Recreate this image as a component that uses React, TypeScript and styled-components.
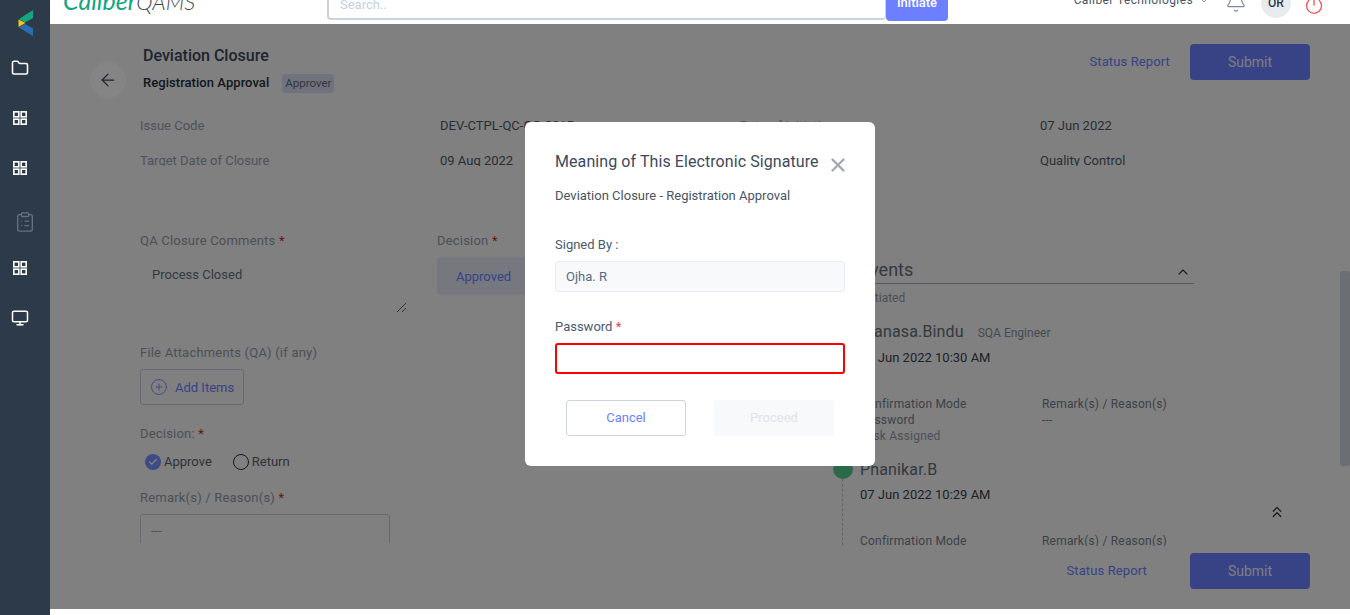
import React from "react";
import styled, { createGlobalStyle } from "styled-components";
import {
  ArrowLeft,
  Bell,
  Check,
  ChevronDown,
  ChevronsUp,
  ChevronUp,
  CirclePlus,
  ClipboardList,
  Folder,
  Monitor,
  Power,
  X,
} from "lucide-react";

const GlobalStyle = createGlobalStyle`
  html, body {
    margin: 0;
    padding: 0;
    height: 100%;
    overflow: hidden;
    background: #fff;
    font-family: Roboto, "Liberation Sans", sans-serif;
  }
  * { box-sizing: border-box; }
`;

const Page = styled.div`
  display: flex;
  width: 1350px;
  height: 615px;
  overflow: hidden;
`;

const Sidebar = styled.nav`
  width: 50px;
  flex: none;
  background: #2c3a4a;
  display: flex;
  flex-direction: column;
`;

const LogoSlot = styled.div`
  height: 43px;
  padding: 10px 0 0 18px;
`;

const NavItem = styled.div<{ $muted?: boolean }>`
  height: 50px;
  display: flex;
  align-items: center;
  padding-left: ${(p) => (p.$muted ? "14px" : "11px")};
  padding-top: ${(p) => (p.$muted ? "8px" : "0")};
  color: ${(p) => (p.$muted ? "#64717f" : "#ffffff")};
`;

const Shell = styled.div`
  flex: 1;
  min-width: 0;
  display: flex;
  flex-direction: column;
`;

const TopBar = styled.header`
  height: 24px;
  flex: none;
  position: relative;
  z-index: 3;
  background: #fff;
  overflow: hidden;
  display: flex;
  align-items: flex-end;
`;

const Brand = styled.div`
  width: 277px;
  padding-left: 13px;
  flex: none;
  display: flex;
  align-items: baseline;
  height: 40px;
  line-height: 40px;
  margin-bottom: 4px;
  font-family: Lato, sans-serif;
  font-size: 25px;
`;

const BrandGreen = styled.span`
  color: #12a77f;
  font-style: italic;
`;

const BrandThin = styled.span`
  color: #3c4652;
  font-style: italic;
  font-weight: 300;
  font-size: 22px;
`;

const SearchBox = styled.div`
  width: 559px;
  height: 40px;
  margin-bottom: 4px;
  flex: none;
  border: 2px solid #c9d4e2;
  border-right-width: 1px;
  border-radius: 4px;
  background: #fff;
  padding: 15px 0 0 11px;
  font-size: 13px;
  line-height: 16px;
  color: #c4cfe2;
`;

const InitiateButton = styled.div`
  width: 62px;
  height: 40px;
  margin-bottom: 3px;
  flex: none;
  background: #6c80ff;
  border-radius: 4px;
  color: #fff;
  font-size: 13px;
  font-weight: 500;
  text-align: center;
  padding-top: 14px;
  line-height: 16px;
`;

const TopRight = styled.div`
  margin-left: auto;
  display: flex;
  align-items: flex-end;
  height: 100%;
  position: relative;
`;

const Company = styled.div`
  font-size: 12px;
  line-height: 14px;
  color: #4a5563;
  position: absolute;
  right: 157px;
  bottom: 17px;
  white-space: nowrap;
  letter-spacing: 0.4px;
`;

const Caret = styled.span`
  position: absolute;
  right: 142px;
  bottom: 19px;
  color: #4a5563;
  display: flex;
`;

const BellWrap = styled.span`
  position: absolute;
  right: 103px;
  bottom: 11px;
  color: #7a8ba3;
  display: flex;
`;

const Avatar = styled.div`
  position: absolute;
  right: 59px;
  bottom: 6px;
  width: 30px;
  height: 30px;
  border-radius: 50%;
  background: #e9ecef;
  color: #2c3a4a;
  font-size: 12px;
  font-weight: 500;
  display: flex;
  align-items: center;
  justify-content: center;
`;

const PowerWrap = styled.span`
  position: absolute;
  right: 26px;
  bottom: 9px;
  color: #f4525c;
  display: flex;
`;

const Main = styled.main`
  height: 585px;
  flex: none;
  position: relative;
  background: #f5f5f5;
  overflow: hidden;
`;

const Heading = styled.section`
  height: 74px;
  padding: 20px 40px 0 40px;
  display: flex;
`;

const BackCircle = styled.div`
  width: 36px;
  height: 36px;
  margin-top: 18px;
  border-radius: 50%;
  background: #fff;
  color: #3a4757;
  display: flex;
  align-items: center;
  justify-content: center;
  flex: none;
`;

const TitleBlock = styled.div`
  margin-left: 17px;
`;

const PageTitle = styled.h1`
  margin: 1px 0 0;
  font-size: 16px;
  font-weight: 500;
  line-height: 22px;
  color: #3a4757;
`;

const SubRow = styled.div`
  margin-top: 6px;
  display: flex;
  align-items: center;
  gap: 13px;
`;

const SubTitle = styled.h2`
  margin: 0;
  font-size: 13px;
  font-weight: 500;
  line-height: 20px;
  letter-spacing: 0.05px;
  color: #262e3c;
`;

const RoleBadge = styled.span`
  padding: 0 3px;
  height: 19px;
  line-height: 19px;
  font-size: 11.5px;
  color: #5f6a7a;
  background: #d6dcf0;
  border-radius: 3px;
`;

const Actions = styled.div`
  margin-left: auto;
  display: flex;
  align-items: center;
  gap: 20px;
  height: 36px;
`;

const LinkText = styled.span`
  font-size: 13px;
  letter-spacing: 0.12px;
  color: #6c80ff;
  margin-bottom: 2px;
`;

const SubmitButton = styled.div`
  width: 120px;
  height: 36px;
  border-radius: 4px;
  background: #6c80ff;
  color: rgba(255, 255, 255, 0.9);
  font-size: 14px;
  font-weight: 400;
  display: flex;
  align-items: center;
  justify-content: center;
`;

const InfoGrid = styled.section`
  height: 48px;
  margin-top: 20px;
  padding-left: 90px;
  display: grid;
  grid-template-columns: repeat(4, 300px);
  grid-auto-rows: 34.5px;
  overflow: hidden;
  font-size: 13px;
  line-height: 16px;
`;

const InfoLabel = styled.span`
  color: #94a0b0;
`;

const InfoValue = styled.span`
  color: #515a66;
`;

const Body = styled.section`
  height: 314px;
  margin-top: 66px;
  display: flex;
  padding-left: 90px;
  overflow: hidden;
`;

const FormColumn = styled.div`
  width: 297px;
  height: 311px;
  padding-top: 1px;
  overflow: hidden;
  flex: none;
  display: flex;
  flex-direction: column;
  & > * {
    flex: none;
  }
`;

const FieldLabel = styled.label<{ $gap?: number }>`
  margin-top: ${(p) => p.$gap ?? 0}px;
  font-size: 13px;
  line-height: 16px;
  color: #919aa8;
  letter-spacing: 0.2px;
`;

const Req = styled.span<{ $bright?: boolean }>`
  color: ${(p) => (p.$bright ? "#f04050" : "#e01818")};
`;

const CommentArea = styled.div`
  height: 58px;
  margin-top: 9px;
  width: 270px;
  padding: 9px 12px 0;
  font-size: 13px;
  line-height: 16px;
  color: #66707f;
  position: relative;
`;

const ResizeGrip = styled.svg`
  position: absolute;
  right: 3px;
  bottom: 3px;
`;

const AddButton = styled.div`
  margin-top: 8px;
  width: 104px;
  height: 36px;
  border: 1px solid #c4cad4;
  border-radius: 3px;
  display: flex;
  align-items: center;
  gap: 7px;
  padding-left: 9px;
  font-size: 13px;
  color: #6c80ff;
`;

const RadioRow = styled.div`
  margin-top: 12px;
  padding-left: 5px;
  display: flex;
  gap: 21px;
`;

const RadioOption = styled.span`
  display: flex;
  align-items: center;
  gap: 3px;
  font-size: 13px;
  line-height: 16px;
  color: #596270;
`;

const RadioDot = styled.span<{ $on?: boolean }>`
  width: 16px;
  height: 16px;
  border-radius: 50%;
  display: flex;
  align-items: center;
  justify-content: center;
  color: #fff;
  background: ${(p) => (p.$on ? "#7890ff" : "transparent")};
  border: ${(p) => (p.$on ? "none" : "1.5px solid #262e3c")};
`;

const RemarkBox = styled.div`
  margin-top: 8px;
  width: 250px;
  height: 60px;
  border: 1px solid #c4cad4;
  border-radius: 3px;
  padding: 8px 10px;
  font-size: 13px;
  line-height: 16px;
  color: #919aa8;
`;

const DecisionColumn = styled.div`
  width: 300px;
  padding-top: 1px;
  flex: none;
  display: flex;
  flex-direction: column;
`;

const ApprovedField = styled.div`
  margin-top: 8px;
  height: 38px;
  width: 240px;
  background: #e3e7f5;
  border-radius: 3px;
  padding: 12px 19px 0;
  font-size: 13px;
  line-height: 16px;
  color: #6c80ff;
`;

const EventsColumn = styled.div`
  width: 400px;
  flex: none;
  margin-left: 113px;
  display: flex;
  flex-direction: column;
  & > * {
    flex: none;
  }
`;

const EventsHead = styled.div`
  margin-top: 28px;
  width: 344px;
  height: 24px;
  border-bottom: 1px solid #a8afba;
  display: flex;
  align-items: flex-start;
  justify-content: space-between;
  padding-left: 10px;
  padding-right: 3px;
  color: #646e7b;
  font-size: 18px;
  line-height: 20px;
`;

const HeadChevron = styled.span`
  display: flex;
  margin-top: 4px;
  color: #2c3a4a;
`;

const Initiated = styled.div`
  margin-top: 7px;
  padding-left: 12px;
  font-size: 12px;
  line-height: 14px;
  color: #939aa8;
`;

const EventEntry = styled.div<{ $gap?: number; $height: number }>`
  position: relative;
  padding-left: 10px;
  margin-top: ${(p) => p.$gap ?? 0}px;
  height: ${(p) => p.$height}px;
`;

const EventDot = styled.span`
  position: absolute;
  left: -17px;
  top: -1px;
  width: 20px;
  height: 20px;
  border-radius: 50%;
  background: #55c78e;
`;

const EventRail = styled.span`
  position: absolute;
  left: -8px;
  top: 19px;
  bottom: 0;
  border-left: 1px dashed #b8bec8;
`;

const NameRow = styled.div`
  display: flex;
  align-items: baseline;
  gap: 14px;
  font-size: 16px;
  line-height: 20px;
  color: #646e7b;
  letter-spacing: 0.15px;
`;

const Role = styled.span`
  font-size: 12px;
  color: #858f9e;
  letter-spacing: 0;
`;

const EventDate = styled.div`
  margin-top: 6px;
  font-size: 13px;
  line-height: 18px;
  color: #3a424e;
`;

const DetailGrid = styled.div`
  margin-top: 29px;
  display: grid;
  grid-template-columns: 182px 180px;
  grid-auto-rows: 16px;
  font-size: 12px;
  line-height: 16px;
  letter-spacing: 0.2px;
  color: #747d8a;
`;

const MutedCell = styled.span`
  color: #939aa8;
`;

const ScrollTop = styled.span`
  position: absolute;
  left: 1218px;
  top: 479px;
  color: #2f3640;
  display: flex;
`;

const ScrollThumb = styled.span`
  position: absolute;
  right: 0;
  top: 247px;
  width: 10px;
  height: 195px;
  border-radius: 3px;
  background: #ced3da;
`;

const Footer = styled.footer`
  height: 36px;
  margin-top: 7px;
  padding-right: 40px;
  display: flex;
  align-items: center;
  justify-content: flex-end;
  gap: 43px;
`;

const Overlay = styled.div`
  position: absolute;
  inset: 0;
  background: rgba(0, 0, 0, 0.48);
  display: flex;
  justify-content: center;
  padding-top: 98px;
`;

const Modal = styled.div`
  width: 350px;
  height: 344px;
  background: #fff;
  border-radius: 6px;
  padding: 30px 30px 0;
  display: flex;
  flex-direction: column;
  & > * {
    flex: none;
  }
`;

const ModalHead = styled.div`
  height: 25px;
  display: flex;
  align-items: flex-start;
  justify-content: space-between;
`;

const ModalTitle = styled.h3`
  margin: 0;
  font-size: 16px;
  font-weight: 400;
  line-height: 20px;
  letter-spacing: 0.08px;
  white-space: nowrap;
  color: #3d4a5c;
`;

const CloseWrap = styled.span`
  color: #a3a9b3;
  display: flex;
  margin: 2px -4px 0 0;
`;

const ModalSub = styled.p`
  margin: 10px 0 0;
  font-size: 13px;
  line-height: 18px;
  color: #4a5563;
`;

const ModalLabel = styled.label<{ $gap: number }>`
  margin-top: ${(p) => p.$gap}px;
  font-size: 13px;
  line-height: 16px;
  color: #4a5a70;
`;

const SignedBy = styled.div`
  margin-top: 8px;
  height: 31px;
  border: 1px solid #e8ebf0;
  border-radius: 3px;
  background: #f8f9fb;
  padding: 0 10px;
  font-size: 13px;
  line-height: 29px;
  color: #5a6a80;
`;

const PasswordInput = styled.div`
  margin-top: 8px;
  height: 31px;
  border: 2px solid #ff0000;
  border-radius: 3px;
`;

const ModalActions = styled.div`
  margin-top: 26px;
  padding: 0 11px;
  display: flex;
  justify-content: space-between;
`;

const ModalButton = styled.div<{ $disabled?: boolean }>`
  width: 120px;
  height: 36px;
  padding-bottom: 2px;
  border-radius: 3px;
  font-size: 13px;
  display: flex;
  align-items: center;
  justify-content: center;
  color: ${(p) => (p.$disabled ? "#dfe3ea" : "#6c80ff")};
  background: ${(p) => (p.$disabled ? "#f8f9fb" : "#fff")};
  border: 1px solid ${(p) => (p.$disabled ? "#f8f9fb" : "#cbd5e1")};
`;

const LogoMark = () => (
  <svg width="16" height="26" viewBox="0 0 16 26">
    <polygon points="15,0 15,8 7,12.5 1,9" fill="#13a67c" />
    <polygon points="0.5,9.5 7.5,13 0.5,17" fill="#f2c811" />
    <polygon points="1,17.5 7,14 15,18.5 15,26" fill="#2a6db5" />
  </svg>
);

const GridIcon = () => (
  <svg width="18" height="18" viewBox="0 0 18 18" fill="none" stroke="currentColor" strokeWidth="1.6">
    <rect x="2.8" y="2.8" width="5" height="5" />
    <rect x="10.2" y="2.8" width="5" height="5" />
    <rect x="2.8" y="10.2" width="5" height="5" />
    <rect x="10.2" y="10.2" width="5" height="5" />
  </svg>
);

export default function App() {
  return (
    <Page>
      <GlobalStyle />
      <Sidebar>
        <LogoSlot>
          <LogoMark />
        </LogoSlot>
        <NavItem><Folder size={18} strokeWidth={2.1} /></NavItem>
        <NavItem><GridIcon /></NavItem>
        <NavItem><GridIcon /></NavItem>
        <NavItem $muted><ClipboardList size={22} strokeWidth={1.5} /></NavItem>
        <NavItem><GridIcon /></NavItem>
        <NavItem><Monitor size={18} strokeWidth={2} /></NavItem>
      </Sidebar>
      <Shell>
        <TopBar>
          <Brand>
            <BrandGreen>Caliber</BrandGreen>
            <BrandThin>QAMS</BrandThin>
          </Brand>
          <SearchBox>Search..</SearchBox>
          <InitiateButton>Initiate</InitiateButton>
          <TopRight>
            <Company>Caliber Technologies</Company>
            <Caret><ChevronDown size={8} /></Caret>
            <BellWrap><Bell size={22} strokeWidth={1.3} /></BellWrap>
            <Avatar>OR</Avatar>
            <PowerWrap><Power size={20} strokeWidth={1.6} /></PowerWrap>
          </TopRight>
        </TopBar>
        <Main>
          <Heading>
            <BackCircle><ArrowLeft size={20} strokeWidth={1.5} /></BackCircle>
            <TitleBlock>
              <PageTitle>Deviation Closure</PageTitle>
              <SubRow>
                <SubTitle>Registration Approval</SubTitle>
                <RoleBadge>Approver</RoleBadge>
              </SubRow>
            </TitleBlock>
            <Actions>
              <LinkText>Status Report</LinkText>
              <SubmitButton>Submit</SubmitButton>
            </Actions>
          </Heading>
          <InfoGrid>
            <InfoLabel>Issue Code</InfoLabel>
            <InfoValue>DEV-CTPL-QC-GG-2015</InfoValue>
            <InfoLabel>Date of Initiation</InfoLabel>
            <InfoValue>07 Jun 2022</InfoValue>
            <InfoLabel>Target Date of Closure</InfoLabel>
            <InfoValue>09 Aug 2022</InfoValue>
            <span />
            <InfoValue>Quality Control</InfoValue>
          </InfoGrid>
          <Body>
            <FormColumn>
              <FieldLabel>QA Closure Comments <Req>*</Req></FieldLabel>
              <CommentArea>
                Process Closed
                <ResizeGrip width="11" height="11" viewBox="0 0 11 11">
                  <path d="M1 10 L10 1 M6 10 L10 6" stroke="#444" strokeWidth="0.8" />
                </ResizeGrip>
              </CommentArea>
              <FieldLabel $gap={29}>File Attachments (QA) (if any)</FieldLabel>
              <AddButton>
                <CirclePlus size={18} strokeWidth={1.1} />
                Add Items
              </AddButton>
              <FieldLabel $gap={21}>Decision: <Req>*</Req></FieldLabel>
              <RadioRow>
                <RadioOption>
                  <RadioDot $on><Check size={10} strokeWidth={3} /></RadioDot>
                  Approve
                </RadioOption>
                <RadioOption>
                  <RadioDot />
                  Return
                </RadioOption>
              </RadioRow>
              <FieldLabel $gap={20}>Remark(s) / Reason(s) <Req>*</Req></FieldLabel>
              <RemarkBox>---</RemarkBox>
            </FormColumn>
            <DecisionColumn>
              <FieldLabel>Decision <Req>*</Req></FieldLabel>
              <ApprovedField>Approved</ApprovedField>
            </DecisionColumn>
            <EventsColumn>
              <EventsHead>
                Events
                <HeadChevron><ChevronUp size={16} strokeWidth={1.6} /></HeadChevron>
              </EventsHead>
              <Initiated>Initiated</Initiated>
              <EventEntry $gap={17} $height={138}>
                <EventDot />
                <EventRail />
                <NameRow>Manasa.Bindu <Role>SQA Engineer</Role></NameRow>
                <EventDate>07 Jun 2022 10:30 AM</EventDate>
                <DetailGrid>
                  <span>Confirmation Mode</span>
                  <span>Remark(s) / Reason(s)</span>
                  <span>Password</span>
                  <span>---</span>
                  <MutedCell>Task Assigned</MutedCell>
                </DetailGrid>
              </EventEntry>
              <EventEntry $height={100}>
                <EventDot />
                <EventRail />
                <NameRow>Phanikar.B</NameRow>
                <EventDate>07 Jun 2022 10:29 AM</EventDate>
                <DetailGrid>
                  <span>Confirmation Mode</span>
                  <span>Remark(s) / Reason(s)</span>
                </DetailGrid>
              </EventEntry>
            </EventsColumn>
          </Body>
          <Footer>
            <LinkText>Status Report</LinkText>
            <SubmitButton>Submit</SubmitButton>
          </Footer>
          <ScrollTop><ChevronsUp size={18} strokeWidth={1.6} /></ScrollTop>
          <ScrollThumb />
          <Overlay>
            <Modal>
              <ModalHead>
                <ModalTitle>Meaning of This Electronic Signature</ModalTitle>
                <CloseWrap><X size={22} strokeWidth={2.6} /></CloseWrap>
              </ModalHead>
              <ModalSub>Deviation Closure - Registration Approval</ModalSub>
              <ModalLabel $gap={32}>Signed By :</ModalLabel>
              <SignedBy>Ojha. R</SignedBy>
              <ModalLabel $gap={27}>Password <Req $bright>*</Req></ModalLabel>
              <PasswordInput />
              <ModalActions>
                <ModalButton>Cancel</ModalButton>
                <ModalButton $disabled>Proceed</ModalButton>
              </ModalActions>
            </Modal>
          </Overlay>
        </Main>
      </Shell>
    </Page>
  );
}
